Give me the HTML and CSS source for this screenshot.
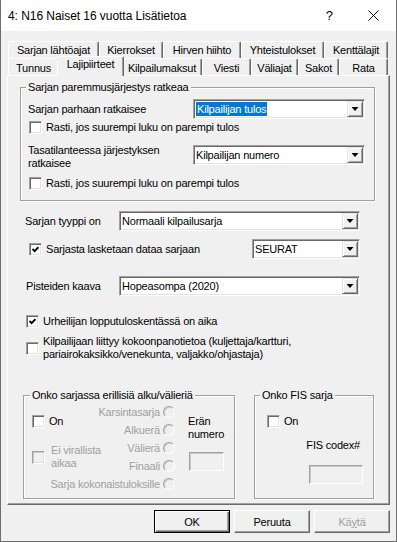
FILE: index.html
```html
<!DOCTYPE html>
<html lang="fi">
<head>
    <meta charset="UTF-8">
    <meta name="viewport" content="width=device-width, initial-scale=1.0">
    <title>4: N16 Naiset 16 vuotta Lisätietoa</title>
    <link rel="stylesheet" href="styles.css">
</head>
<body>
<div class="window">
    <!-- Title bar -->
    <div class="titlebar">
        <span class="title">4: N16 Naiset 16 vuotta Lisätietoa</span>
        <span class="help">?</span>
        <svg class="close" width="11" height="11" viewBox="0 0 11 11">
            <path d="M0.5 0.5L10.5 10.5M10.5 0.5L0.5 10.5" stroke="#000" stroke-width="1"/>
        </svg>
    </div>

    <div class="client">
        <!-- Tab strip, two rows -->
        <div class="tabs">
            <div class="tabrow back">
                <div class="tab">Sarjan lähtöajat</div>
                <div class="tab">Kierrokset</div>
                <div class="tab">Hirven hiihto</div>
                <div class="tab">Yhteistulokset</div>
                <div class="tab">Kenttälajit</div>
            </div>
            <div class="tabrow front">
                <div class="tab">Tunnus</div>
                <div class="tab active">Lajipiirteet</div>
                <div class="tab">Kilpailumaksut</div>
                <div class="tab">Viesti</div>
                <div class="tab">Väliajat</div>
                <div class="tab">Sakot</div>
                <div class="tab">Rata</div>
            </div>
        </div>

        <!-- Tab page -->
        <div class="panel">
            <div class="group order">
                <div class="legend">Sarjan paremmusjärjestys ratkeaa</div>
                <div class="field best">
                    <span class="label">Sarjan parhaan ratkaisee</span>
                    <div class="combo"><span class="value"><span class="sel">Kilpailijan tulos</span></span><span class="drop"></span></div>
                </div>
                <div class="check rank1">
                    <span class="box"></span>
                    <span>Rasti, jos suurempi luku on parempi tulos</span>
                </div>
                <div class="field tie">
                    <span class="label">Tasatilanteessa järjestyksen ratkaisee</span>
                    <div class="combo"><span class="value">Kilpailijan numero</span><span class="drop"></span></div>
                </div>
                <div class="check rank2">
                    <span class="box"></span>
                    <span>Rasti, jos suurempi luku on parempi tulos</span>
                </div>
            </div>

            <div class="field type">
                <span class="label">Sarjan tyyppi on</span>
                <div class="combo long"><span class="value">Normaali kilpailusarja</span><span class="drop"></span></div>
            </div>

            <div class="field data">
                <div class="check">
                    <span class="box"><svg width="7" height="7" viewBox="0 0 7 7"><path d="M0.5 3L2.6 5.2L6.5 1.2" fill="none" stroke="#000" stroke-width="1.9"/></svg></span>
                    <span>Sarjasta lasketaan dataa sarjaan</span>
                </div>
                <div class="combo short"><span class="value">SEURAT</span><span class="drop"></span></div>
            </div>

            <div class="field points">
                <span class="label">Pisteiden kaava</span>
                <div class="combo long"><span class="value">Hopeasompa (2020)</span><span class="drop"></span></div>
            </div>

            <div class="check athlete">
                <span class="box"><svg width="7" height="7" viewBox="0 0 7 7"><path d="M0.5 3L2.6 5.2L6.5 1.2" fill="none" stroke="#000" stroke-width="1.9"/></svg></span>
                <span>Urheilijan lopputuloskentässä on aika</span>
            </div>
            <div class="check crew">
                <span class="box"></span>
                <span>Kilpailijaan liittyy kokoonpanotietoa (kuljettaja/kartturi,<br>pariairokaksikko/venekunta, valjakko/ohjastaja)</span>
            </div>

            <div class="bottom">
                <div class="group heats">
                    <div class="legend">Onko sarjassa erillisiä alku/välieriä</div>
                    <div class="heat-body">
                        <div class="heat-grid">
                            <div class="check heat-on">
                                <span class="box"></span>
                                <span>On</span>
                            </div>
                            <div class="check disabled heat-free">
                                <span class="box"></span>
                                <span>Ei virallista<br>aikaa</span>
                            </div>
                            <div class="radio-row">Karsintasarja<span class="radio"></span></div>
                            <div class="radio-row">Alkuerä<span class="radio"></span></div>
                            <div class="radio-row">Välierä<span class="radio"></span></div>
                            <div class="radio-row">Finaali<span class="radio"></span></div>
                            <div class="radio-row total">Sarja kokonaistuloksille<span class="radio"></span></div>
                        </div>
                        <div class="heat-number">
                            <span>Erän<br>numero</span>
                            <span class="textbox"></span>
                        </div>
                    </div>
                </div>

                <div class="group fis">
                    <div class="legend">Onko FIS sarja</div>
                    <div class="check fis-on">
                        <span class="box"></span>
                        <span>On</span>
                    </div>
                    <span class="fis-label">FIS codex#</span>
                    <span class="textbox fis-code"></span>
                </div>
            </div>
        </div>

        <!-- Dialog buttons -->
        <div class="buttons">
            <div class="button default">OK</div>
            <div class="button">Peruuta</div>
            <div class="button disabled">Kä<u>y</u>tä</div>
        </div>
    </div>
</div>
</body>
</html>
```

FILE: styles.css
```css
* {
    box-sizing: border-box;
}

body {
    margin: 0;
    font-family: "Liberation Sans", Arial, sans-serif;
    font-size: 11px;
    letter-spacing: -0.2px;
    color: #000;
    background: #fff;
}

/* Dialog frame */
.window {
    width: 397px;
    height: 542px;
    display: flex;
    flex-direction: column;
    border: 1px solid #6f6f6f;
    border-top: none;
}

.titlebar {
    height: 31px;
    flex: none;
    display: flex;
    align-items: center;
    padding: 0 17px 0 7px;
    background: #fff;
    font-family: "Segoe UI", "Liberation Sans", sans-serif;
    font-size: 12px;
    letter-spacing: -0.05px;
}

.title {
    flex: 1;
}

.help {
    margin-right: 35px;
    font-size: 13px;
}

.close {
    display: block;
}

.client {
    flex: 1;
    display: flex;
    flex-direction: column;
    padding: 10px 6px 8px;
    background: #f0f0f0;
}

/* Tabs */
.tabs {
    margin: 0 2px 0 1px;
}

.tabrow {
    display: flex;
    height: 17px;
}

.tab {
    flex: none;
    height: 17px;
    border: 1px solid;
    border-color: #fff #696969 transparent #fff;
    border-bottom: none;
    border-radius: 2px 2px 0 0;
    box-shadow: inset -1px 0 #a0a0a0;
    background: #f0f0f0;
    text-align: center;
    white-space: nowrap;
    line-height: 16px;
}

.back .tab:nth-child(1) { width: 91px; }
.back .tab:nth-child(2) { width: 64px; }
.back .tab:nth-child(3) { width: 78px; }
.back .tab:nth-child(4) { width: 83px; }
.back .tab:nth-child(5) { width: 64px; }

.front .tab {
    padding-top: 2px;
    line-height: 14px;
}

.front .tab:nth-child(1) { width: 51px; }
.front .tab:nth-child(2) { width: 67px; } /* selected tab, widened by its negative margins */
.front .tab:nth-child(3) { width: 80px; }
.front .tab:nth-child(4) { width: 49px; }
.front .tab:nth-child(5) { width: 47px; }
.front .tab:nth-child(6) { width: 41px; }
.front .tab:nth-child(7) { width: 49px; }

.front .tab.active {
    position: relative;
    z-index: 1;
    height: 20px;
    margin: -2px -2px -1px;
    padding-top: 0;
    line-height: 15px;
}

.panel {
    height: 430px;
    flex: none;
    display: flex;
    flex-direction: column;
    align-items: flex-start;
    border: 1px solid;
    border-color: #fff #696969 #696969 #fff;
    box-shadow: inset -1px -1px #a0a0a0;
}

/* Group boxes */
.group {
    display: flex;
    flex-direction: column;
    align-items: flex-start;
    border: 1px solid #a0a0a0;
    box-shadow: 1px 1px #fff, inset 1px 1px #fff;
}

.legend {
    margin: -7px 0 0 -2px;
    padding: 0 2px;
    background: #f0f0f0;
    line-height: 13px;
    white-space: nowrap;
}

.order {
    width: 355px;
    margin: 11px 0 0 12px;
    padding: 0 8px 10px 7px;
}

.field {
    display: flex;
    align-items: center;
    height: 20px;
}

.label {
    flex: none;
    line-height: 13px;
}

.order .label {
    width: 165px;
}

.order .best {
    margin-top: 5px;
}

.order .tie {
    margin-top: 11px;
}

.tie .label {
    margin-top: 3px;
}

.rank1 {
    margin: 2px 0 0 1px;
}

.rank2 {
    margin: 12px 0 0 1px;
}

.type {
    margin: 10px 0 0 17px;
}

.type .label {
    width: 94px;
}

.data {
    width: 331px;
    justify-content: space-between;
    margin: 8px 0 0 21px;
}

.points {
    margin: 17px 0 0 18px;
}

.points .label {
    width: 93px;
}

.athlete {
    margin: 19px 0 0 18px;
}

.crew {
    margin: 7px 0 0 18px;
    line-height: 11px;
}

/* Combo boxes */
.combo {
    width: 172px;
    height: 20px;
    display: flex;
    padding: 1px;
    background: #fff;
    border: 1px solid;
    border-color: #a0a0a0 #fff #fff #a0a0a0;
    box-shadow: inset 1px 1px #696969, inset -1px -1px #e3e3e3;
}

.combo.long {
    width: 241px;
}

.combo.short {
    width: 108px;
}

.value {
    flex: 1;
    padding: 1px 0 1px 1px;
    line-height: 14px;
    white-space: nowrap;
}

.sel {
    display: inline-block;
    padding: 0 1px;
    background: #0078d7;
    color: #fff;
}

.drop {
    width: 16px;
    flex: none;
    display: flex;
    align-items: center;
    justify-content: center;
    background: #f0f0f0;
    border: 1px solid;
    border-color: #e3e3e3 #696969 #696969 #e3e3e3;
    box-shadow: inset 1px 1px #fff, inset -1px -1px #a0a0a0;
}

.drop::after {
    content: "";
    width: 7px;
    height: 4px;
    background: #000;
    clip-path: polygon(0 0, 100% 0, 50% 100%);
}

/* Check boxes and radio buttons */
.check {
    display: flex;
    align-items: center;
    gap: 4px;
    line-height: 13px;
    white-space: nowrap;
}

.box {
    width: 13px;
    height: 13px;
    flex: none;
    display: flex;
    align-items: center;
    justify-content: center;
    background: #fff;
    border: 1px solid;
    border-color: #a0a0a0 #fff #fff #a0a0a0;
    box-shadow: inset 1px 1px #696969, inset -1px -1px #e3e3e3;
}

.box svg {
    display: block;
}

.disabled {
    color: #a0a0a0;
}

.check.disabled {
    gap: 6px;
}

.check.disabled .box {
    background: #f0f0f0;
    box-shadow: inset 1px 1px #c8c8c8, inset -1px -1px #e3e3e3;
}

.radio-row {
    grid-column: 2;
    display: flex;
    align-items: center;
    justify-content: flex-end;
    gap: 3px;
    color: #a0a0a0;
    white-space: nowrap;
}

.radio-row.total {
    grid-column: 1 / 3;
}

.radio {
    width: 12px;
    height: 12px;
    flex: none;
    border-radius: 50%;
    background: #f0f0f0;
    border: 1px solid;
    border-color: #a0a0a0 #fff #fff #a0a0a0;
    box-shadow: inset 1px 1px #cfcfcf;
}

.textbox {
    display: block;
    width: 35px;
    height: 19px;
    background: #f0f0f0;
    border: 1px solid;
    border-color: #a0a0a0 #fff #fff #a0a0a0;
    box-shadow: inset 1px 1px #c8c8c8;
}

/* Bottom group boxes */
.bottom {
    display: flex;
    gap: 19px;
    margin: 34px 0 0 15px;
}

.heats {
    width: 212px;
    height: 104px;
    padding: 0 10px 0 8px;
}

.heat-body {
    display: flex;
    margin-top: 1px;
}

.heat-grid {
    display: grid;
    grid-template-columns: 62px 81px;
    grid-template-rows: repeat(5, 18px);
}

.heat-on {
    grid-area: 1 / 1 / 3 / 2;
}

.heat-free {
    grid-area: 3 / 1 / 5 / 2;
}

.heat-number {
    display: flex;
    flex-direction: column;
    margin: 12px 0 0 13px;
    line-height: 13px;
}

.heat-number .textbox {
    margin: 11px 0 0 1px;
}

.fis {
    width: 120px;
    height: 104px;
    padding-left: 12px;
}

.fis .legend {
    margin-left: -7px;
}

.fis-on {
    margin-top: 13px;
}

.fis-label {
    align-self: flex-end;
    margin: 11px 13px 0 0;
    line-height: 13px;
}

.fis-code {
    width: 54px;
    align-self: flex-end;
    margin: 13px 10px 0 0;
}

/* Dialog buttons */
.buttons {
    display: flex;
    justify-content: flex-end;
    gap: 4px;
    margin-top: 5px;
}

.button {
    width: 76px;
    height: 23px;
    display: flex;
    align-items: center;
    justify-content: center;
    background: #f0f0f0;
    border: 1px solid;
    border-color: #fff #696969 #696969 #fff;
    box-shadow: inset -1px -1px #a0a0a0;
}

.button.default {
    border-color: #000;
    box-shadow: inset 1px 1px #fff, inset -1px -1px #696969, inset -2px -2px #a0a0a0;
}

.button u {
    text-decoration-thickness: 1px;
}
```
